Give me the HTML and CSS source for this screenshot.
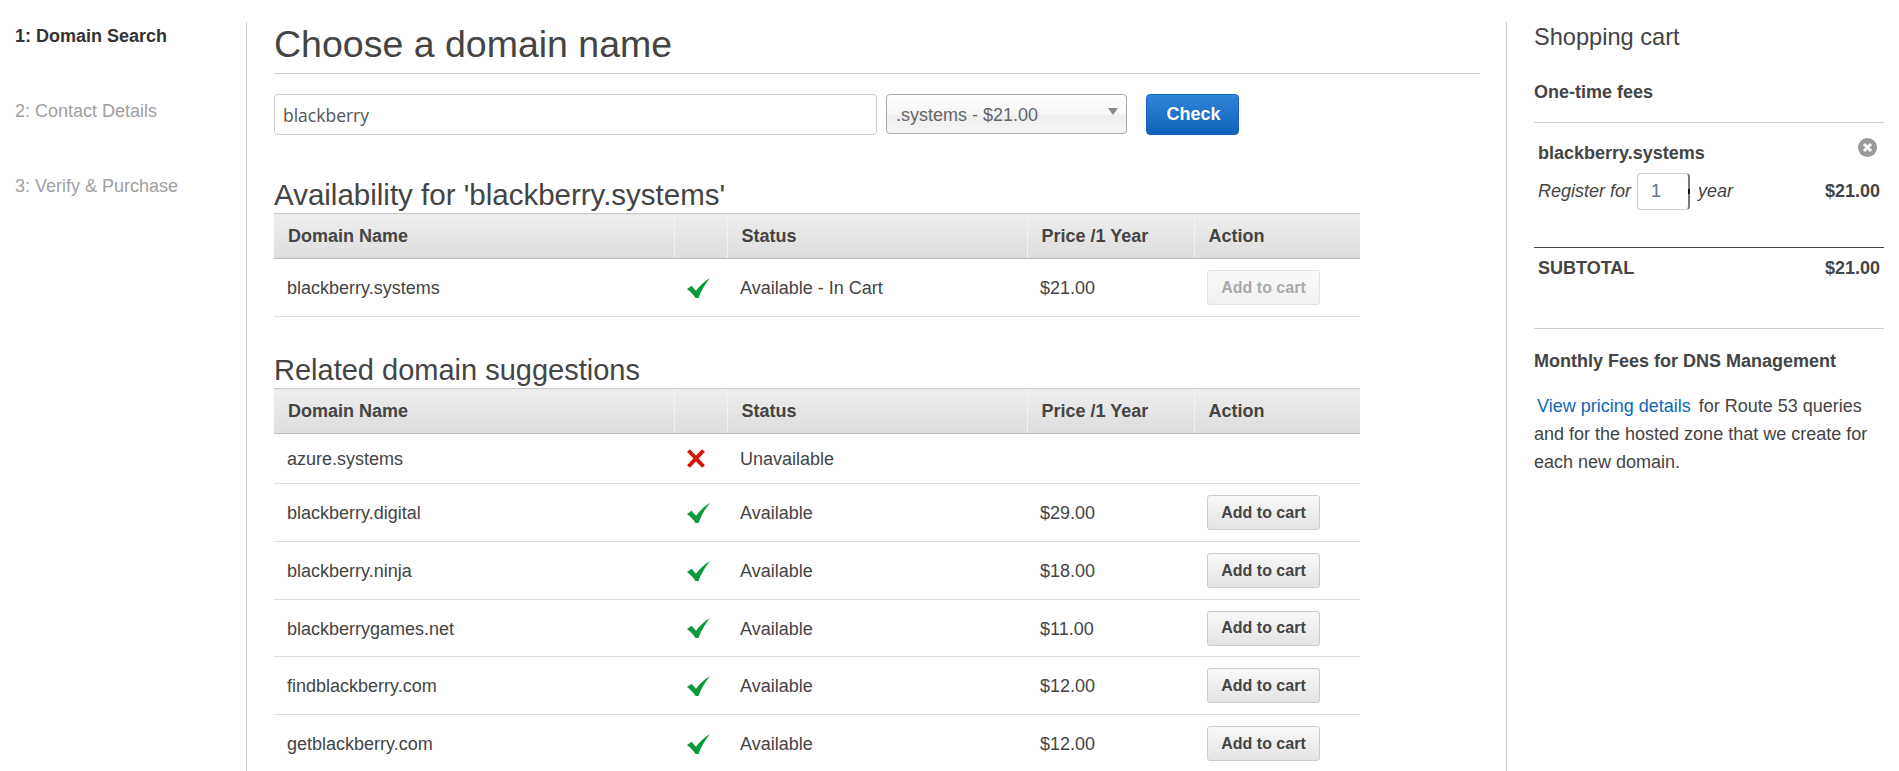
FILE: index.html
```html
<!DOCTYPE html>
<html lang="en">
<head>
  <meta charset="UTF-8">
  <title>Choose a domain name</title>
  <link rel="stylesheet" href="styles.css">
</head>
<body>
  <div class="page">

    <nav class="steps">
      <div class="step current">1: Domain Search</div>
      <div class="step">2: Contact Details</div>
      <div class="step">3: Verify &amp; Purchase</div>
    </nav>

    <main class="main">
      <h1>Choose a domain name</h1>
      <form class="search">
        <input class="search-input" type="text" value="blackberry">
        <div class="tld-select">.systems - $21.00<span class="caret"></span></div>
        <button class="btn-primary" type="button">Check</button>
      </form>

      <h2 class="first">Availability for 'blackberry.systems'</h2>
      <table class="domains">
        <thead>
          <tr><th>Domain Name</th><th></th><th>Status</th><th>Price /1 Year</th><th>Action</th></tr>
        </thead>
        <tbody>
          <tr>
            <td>blackberry.systems</td>
            <td class="icon"><svg width="24" height="20" viewBox="0 0 24 20"><path class="ok" d="M0 11 4.500 7.700 9 12.700C12.500 8 17 3.500 23 0 18 6 14 13 11.500 20H8.500C6.500 16.500 3.500 13.500 0 11Z"/></svg></td>
            <td>Available - In Cart</td>
            <td>$21.00</td>
            <td><button class="btn" type="button" disabled>Add to cart</button></td>
          </tr>
        </tbody>
      </table>

      <h2>Related domain suggestions</h2>
      <table class="domains">
        <thead>
          <tr><th>Domain Name</th><th></th><th>Status</th><th>Price /1 Year</th><th>Action</th></tr>
        </thead>
        <tbody>
          <tr class="short">
            <td>azure.systems</td>
            <td class="icon"><svg width="18" height="19" viewBox="0 0 18 19"><path class="no" d="M1.500 1.500 16.500 17.500M16.500 1.500 1.500 17.500"/></svg></td>
            <td>Unavailable</td>
            <td></td>
            <td></td>
          </tr>
          <tr>
            <td>blackberry.digital</td>
            <td class="icon"><svg width="24" height="20" viewBox="0 0 24 20"><path class="ok" d="M0 11 4.500 7.700 9 12.700C12.500 8 17 3.500 23 0 18 6 14 13 11.500 20H8.500C6.500 16.500 3.500 13.500 0 11Z"/></svg></td>
            <td>Available</td>
            <td>$29.00</td>
            <td><button class="btn" type="button">Add to cart</button></td>
          </tr>
          <tr>
            <td>blackberry.ninja</td>
            <td class="icon"><svg width="24" height="20" viewBox="0 0 24 20"><path class="ok" d="M0 11 4.500 7.700 9 12.700C12.500 8 17 3.500 23 0 18 6 14 13 11.500 20H8.500C6.500 16.500 3.500 13.500 0 11Z"/></svg></td>
            <td>Available</td>
            <td>$18.00</td>
            <td><button class="btn" type="button">Add to cart</button></td>
          </tr>
          <tr class="row-57">
            <td>blackberrygames.net</td>
            <td class="icon"><svg width="24" height="20" viewBox="0 0 24 20"><path class="ok" d="M0 11 4.500 7.700 9 12.700C12.500 8 17 3.500 23 0 18 6 14 13 11.500 20H8.500C6.500 16.500 3.500 13.500 0 11Z"/></svg></td>
            <td>Available</td>
            <td>$11.00</td>
            <td><button class="btn" type="button">Add to cart</button></td>
          </tr>
          <tr>
            <td>findblackberry.com</td>
            <td class="icon"><svg width="24" height="20" viewBox="0 0 24 20"><path class="ok" d="M0 11 4.500 7.700 9 12.700C12.500 8 17 3.500 23 0 18 6 14 13 11.500 20H8.500C6.500 16.500 3.500 13.500 0 11Z"/></svg></td>
            <td>Available</td>
            <td>$12.00</td>
            <td><button class="btn" type="button">Add to cart</button></td>
          </tr>
          <tr>
            <td>getblackberry.com</td>
            <td class="icon"><svg width="24" height="20" viewBox="0 0 24 20"><path class="ok" d="M0 11 4.500 7.700 9 12.700C12.500 8 17 3.500 23 0 18 6 14 13 11.500 20H8.500C6.500 16.500 3.500 13.500 0 11Z"/></svg></td>
            <td>Available</td>
            <td>$12.00</td>
            <td><button class="btn" type="button">Add to cart</button></td>
          </tr>
        </tbody>
      </table>
    </main>

    <aside class="cart">
      <h3>Shopping cart</h3>
      <h4 class="fees">One-time fees</h4>
      <div class="cart-item">
        <div class="item-top">
          <strong>blackberry.systems</strong>
          <svg class="remove" width="19" height="19" viewBox="0 0 19 19"><circle cx="9.500" cy="9.500" r="9.500" fill="#999"/><path d="M6 6 13 13M13 6 6 13" stroke="#fff" stroke-width="3"/></svg>
        </div>
        <div class="item-row">
          <em>Register for</em>
          <span class="years">1<span class="spin"></span></span>
          <em>year</em>
          <strong class="item-price">$21.00</strong>
        </div>
      </div>
      <div class="subtotal"><span>SUBTOTAL</span><span>$21.00</span></div>
      <div class="monthly">
        <h4>Monthly Fees for DNS Management</h4>
        <p><a href="#">View pricing details</a> for Route 53 queries and for the hosted zone that we create for each new domain.</p>
      </div>
    </aside>

  </div>
</body>
</html>
```

FILE: styles.css
```css
html, body {
  margin: 0;
  padding: 0;
  height: 771px;
  overflow: hidden;
}
body {
  font-family: "Liberation Sans", Arial, sans-serif;
  font-size: 18px;
  color: #444;
  background: #fff;
}
.page {
  display: flex;
  height: 749px;
  padding-top: 22px;
}

/* steps */
.steps {
  width: 247px;
  box-sizing: border-box;
  padding-left: 15px;
  border-right: 1px solid #ccc;
}
.step {
  height: 75px;
  line-height: 28px;
  color: #a0a0a0;
}
.step.current {
  color: #333;
  font-weight: bold;
}

/* main column */
.main {
  width: 1206px;
  margin-left: 27px;
}
h1 {
  margin: 0;
  height: 51px;
  font-size: 37.500px;
  font-weight: normal;
  line-height: 44px;
  border-bottom: 1px solid #ccc;
}
.search {
  display: flex;
  align-items: flex-start;
  margin-top: 20px;
}
.search-input {
  width: 603px;
  height: 41px;
  box-sizing: border-box;
  padding: 0 8px;
  font-family: "Open Sans", sans-serif;
  font-size: 17.500px;
  color: #555;
  border: 1px solid #ccc;
  border-radius: 4px;
}
.tld-select {
  position: relative;
  width: 241px;
  height: 40px;
  box-sizing: border-box;
  margin-left: 9px;
  padding-left: 9px;
  line-height: 40px;
  color: #666;
  border: 1px solid #aaa;
  border-radius: 4px;
  background: linear-gradient(#fff, #f7f7f7 50%, #eee 55%, #f5f5f5);
}
.caret {
  position: absolute;
  top: 13px;
  right: 8px;
  border-left: 5px solid transparent;
  border-right: 5px solid transparent;
  border-top: 7px solid #888;
}
.btn-primary {
  width: 93px;
  height: 41px;
  margin-left: 19px;
  padding: 0 0 0 2px;
  font: bold 18px "Liberation Sans", Arial, sans-serif;
  color: #fff;
  border: 1px solid #1166bb;
  border-radius: 4px;
  background: linear-gradient(#3084dc, #1060b8);
}
h2 {
  margin: 37px 0 0;
  height: 34px;
  font-size: 29px;
  font-weight: normal;
  line-height: 32px;
}
h2.first {
  margin-top: 44px;
  font-size: 29.500px;
}

/* domain tables */
.domains {
  width: 1086px;
  border-collapse: collapse;
  table-layout: fixed;
}
.domains th {
  height: 45px;
  padding: 0 14px;
  box-sizing: border-box;
  text-align: left;
  font-size: 18px;
  border-top: 1px solid #ccc;
  border-bottom: 1px solid #bbb;
  border-left: 1px solid #f2f2f2;
  background: linear-gradient(#eee, #ddd);
}
.domains th:first-child {
  width: 400px;
  border-left: 0;
}
.domains th:nth-child(2) { width: 53px; }
.domains th:nth-child(3) { width: 300px; }
.domains th:nth-child(4) { width: 167px; }
.domains td {
  height: 58px;
  padding: 2px 13px 0;
  box-sizing: border-box;
  border-bottom: 1px solid #ddd;
}
.domains tr.short td { height: 50px; }
.domains tr.row-57 td { height: 57px; }
.domains td.icon {
  padding: 0 0 0 13px;
}
.domains td svg {
  display: block;
}
.ok { fill: #0a9a3c; }
.no {
  fill: none;
  stroke: #d01505;
  stroke-width: 4;
}
.btn {
  display: block;
  width: 113px;
  height: 35px;
  margin-top: -2px;
  padding: 0;
  font: bold 16px "Liberation Sans", Arial, sans-serif;
  color: #444;
  border: 1px solid #ccc;
  border-radius: 3px;
  background: linear-gradient(#f8f8f8, #e4e4e4);
}
.btn:disabled {
  color: #aaa;
  border-color: #e2e2e2;
  background: linear-gradient(#fafafa, #f0f0f0);
}

/* cart */
.cart {
  width: 378px;
  box-sizing: border-box;
  margin-left: 26px;
  padding: 0 0 0 27px;
  border-left: 1px solid #ccc;
}
.cart h3 {
  margin: 0;
  font-size: 23.600px;
  font-weight: normal;
  line-height: 30px;
}
.cart h4 {
  margin: 0;
  font-size: 18px;
  line-height: 24px;
}
.cart h4.fees {
  margin-top: 28px;
  padding-bottom: 18px;
  border-bottom: 1px solid #ccc;
}
.cart-item {
  padding: 16px 4px 0;
  height: 125px;
  box-sizing: border-box;
  border-bottom: 1px solid #444;
}
.item-top {
  display: flex;
  justify-content: space-between;
  padding-right: 3px;
  line-height: 28px;
}
.remove {
  margin-top: -1px;
}
.item-row {
  display: flex;
  align-items: center;
  margin-top: 5px;
}
.years {
  position: relative;
  display: block;
  width: 53px;
  height: 37px;
  box-sizing: border-box;
  margin: 1px 8px 0 6px;
  padding-left: 13px;
  line-height: 35px;
  color: #667788;
  border: 1px solid #ccc;
  border-right: 2px solid #777;
  border-radius: 4px;
}
.spin {
  position: absolute;
  top: 15px;
  right: -2px;
  width: 2px;
  height: 5px;
  background: #111;
}
.item-price {
  margin-left: auto;
}
.subtotal {
  display: flex;
  justify-content: space-between;
  padding: 7px 4px 0;
  height: 81px;
  box-sizing: border-box;
  font-weight: bold;
  line-height: 26px;
  border-bottom: 1px solid #ccc;
}
.monthly {
  padding-top: 20px;
}
.monthly p {
  margin: 19px 0 0;
  line-height: 28px;
}
.monthly a {
  color: #1166bb;
  text-decoration: none;
  margin-left: 3px;
  margin-right: 3px;
}
```
